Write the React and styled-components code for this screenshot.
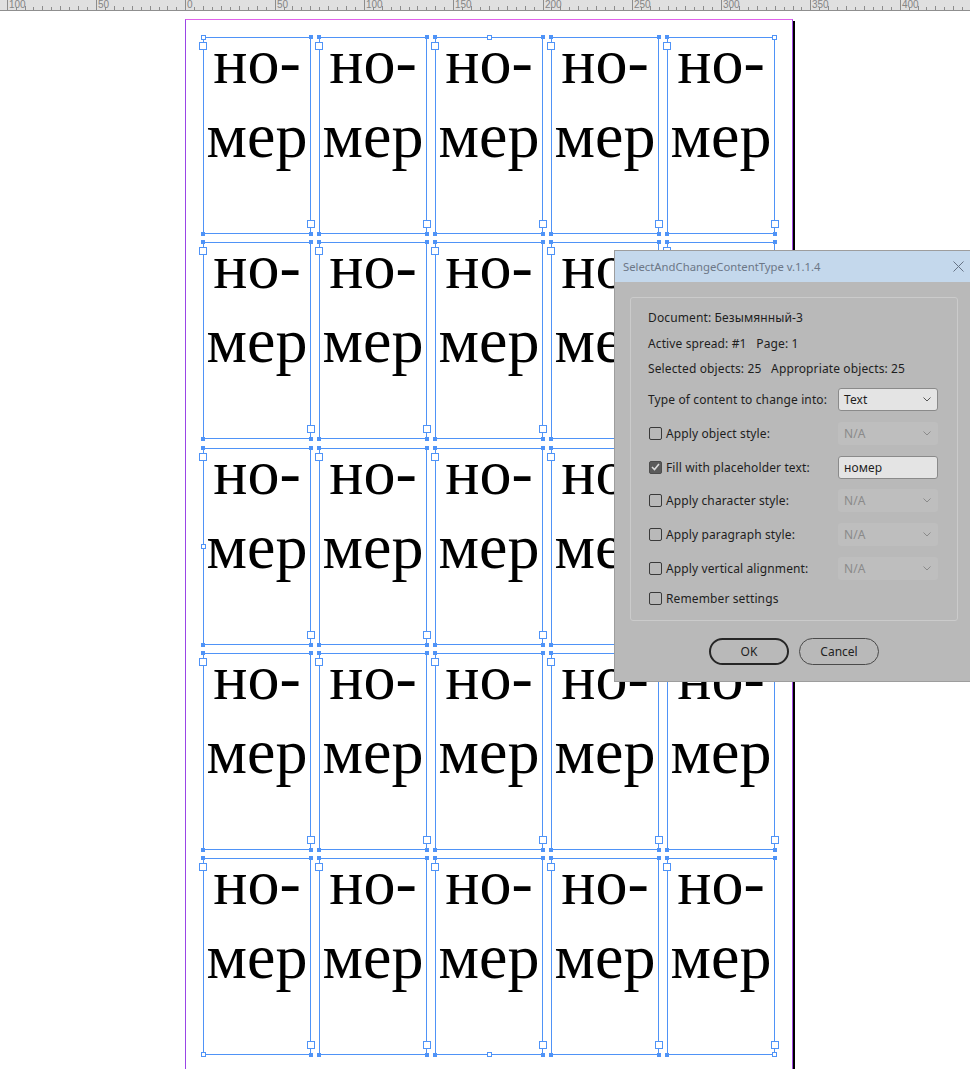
import React from "react";
import styled, { createGlobalStyle } from "styled-components";

const BLUE = "#4f93f7";

const GlobalStyle = createGlobalStyle`
  html, body {
    margin: 0;
    padding: 0;
    background: #fff;
    overflow: hidden;
  }
`;

const Screen = styled.div`
  position: relative;
  width: 970px;
  height: 1069px;
  overflow: hidden;
  background: #fff;
`;

const RulerSvg = styled.svg`
  display: block;
  width: 970px;
  height: 11px;
  background: #e0e0e0;
`;

const Pasteboard = styled.div`
  padding: 8px 0 0 185px;
`;

const Page = styled.div`
  box-sizing: border-box;
  width: 608px;
  height: 1100px;
  padding: 17px;
  border-left: 1px solid #9a45e6;
  border-top: 1px solid #df62ea;
  border-right: 1px solid #a04ae2;
  box-shadow: 2px 2px 0 #000;
  background: #fff;
`;

const FrameGrid = styled.div`
  position: relative;
  display: grid;
  grid-template-columns: repeat(5, 108px);
  grid-auto-rows: 197px;
  column-gap: 8px;
  row-gap: 8.25px;
  width: 572px;
`;

const Frame = styled.div`
  position: relative;
  box-sizing: border-box;
  border: 1px solid ${BLUE};
  text-align: center;
`;

const FrameText = styled.div`
  margin-top: -13px;
  font-family: "Liberation Serif", "Times New Roman", serif;
  font-size: 64px;
  line-height: 74px;
  color: #000;
`;

const Port = styled.span`
  position: absolute;
  box-sizing: border-box;
  width: 8px;
  height: 8px;
  background: #fff;
  border: 1px solid ${BLUE};
  ${(p) =>
    p.$out
      ? "right: -5px; bottom: 5px;"
      : "left: -5px; top: 4px;"}
`;

const Corner = styled.span`
  position: absolute;
  width: 4px;
  height: 4px;
  background: ${BLUE};
  ${(p) => (p.$bottom ? "bottom: -3px;" : "top: -3px;")}
  ${(p) => (p.$right ? "right: -3px;" : "left: -3px;")}
`;

const GroupHandle = styled.span`
  position: absolute;
  box-sizing: border-box;
  width: 5px;
  height: 5px;
  background: #fff;
  border: 1px solid ${BLUE};
  z-index: 2;
`;

const Dialog = styled.div`
  position: absolute;
  left: 614px;
  top: 250px;
  width: 358px;
  background: #b9b9b9;
  border: 1px solid #9d9d9d;
  font-family: "Noto Sans", "Open Sans", sans-serif;
  font-size: 12px;
  letter-spacing: 0.12px;
  color: #1e1e1e;
  z-index: 5;
`;

const TitleBar = styled.div`
  display: flex;
  align-items: center;
  justify-content: space-between;
  height: 31px;
  padding: 0 9px 0 8px;
  background: #c4d8ec;
  color: #6c7787;
  font-size: 11.3px;
  letter-spacing: 0;
`;

const Panel = styled.div`
  margin: 15px 15px 0;
  padding: 7px 19px 13px 17px;
  border: 1px solid #cbcbcb;
  border-radius: 3px;
`;

const InfoRow = styled.div`
  height: 25.5px;
  line-height: 25.5px;
  white-space: pre;
`;

const ControlList = styled.div`
  display: flex;
  flex-direction: column;
  gap: 10.8px;
  margin-top: 6.5px;
`;

const ControlRow = styled.div`
  display: flex;
  align-items: center;
  justify-content: space-between;
  height: 23px;
`;

const CheckLabel = styled.label`
  display: flex;
  align-items: center;
  gap: 4px;
  padding-left: 1px;
  height: ${(p) => (p.$tall ? "18px" : "auto")};
  margin-top: ${(p) => (p.$tall ? "9.5px" : "0")};
`;

const Box = styled.span`
  display: flex;
  align-items: center;
  justify-content: center;
  box-sizing: border-box;
  width: 13px;
  height: 13px;
  border: 1px solid ${(p) => (p.$checked ? "#4c4c4c" : "#3a3a3a")};
  border-radius: 2px;
  background: ${(p) => (p.$checked ? "#5b5b5b" : "transparent")};
`;

const Field = styled.div`
  display: flex;
  align-items: center;
  justify-content: space-between;
  box-sizing: border-box;
  width: 100px;
  height: 23px;
  padding: 0 6px 0 5px;
  border-radius: 3px;
  border: 1px solid ${(p) => (p.$disabled ? "transparent" : "#8a8a8a")};
  background: ${(p) => (p.$disabled ? "#bebebe" : "#e4e4e4")};
  color: ${(p) => (p.$disabled ? "#8a8a8a" : "#1e1e1e")};
`;

const Buttons = styled.div`
  display: flex;
  justify-content: center;
  gap: 10px;
  padding: 17px 0 16px;
`;

const Button = styled.button`
  box-sizing: border-box;
  width: 80px;
  height: 27px;
  border-radius: 14px;
  border: ${(p) => (p.$primary ? "2px solid #262626" : "1px solid #4a4a4a")};
  background: transparent;
  font: inherit;
  color: #222;
  padding: 0;
`;

function Ruler() {
  const zero = 185.3;
  const unit = 89.3 / 50;
  const ticks = [];
  const labels = [];
  for (let u = -105; u <= 440; u += 5) {
    const x = Math.round(zero + u * unit) + 0.5;
    const major = u % 50 === 0;
    const h = major ? 11 : u % 10 === 0 ? 4 : 3;
    ticks.push(<line key={u} x1={x} x2={x} y1={10} y2={10 - h} />);
    if (major) {
      labels.push(
        <text key={"l" + u} x={x + 1.5} y={7.5}>
          {Math.abs(u)}
        </text>
      );
    }
  }
  return (
    <RulerSvg viewBox="0 0 970 11">
      <g stroke="#8c8c8c" strokeWidth="1">{ticks}</g>
      <line x1="0" x2="970" y1="10.5" y2="10.5" stroke="#8f8f8f" />
      <g fill="#858585" fontSize="10" fontFamily="Liberation Sans, sans-serif">
        {labels}
      </g>
    </RulerSvg>
  );
}

const Chevron = ({ color }) => (
  <svg width="8" height="5" viewBox="0 0 8 5">
    <polyline points="0.5,0.5 4,4 7.5,0.5" fill="none" stroke={color} strokeWidth="1" />
  </svg>
);

const Check = () => (
  <svg width="9" height="8" viewBox="0 0 9 8">
    <polyline points="1,4 3.5,6.5 8,1" fill="none" stroke="#dcdcdc" strokeWidth="1.6" />
  </svg>
);

const groupHandles = [
  ["-2px", "-2px"],
  ["calc(50% - 2.5px)", "-2px"],
  ["calc(100% - 3px)", "-2px"],
  ["-2px", "calc(50% - 2.5px)"],
  ["calc(100% - 3px)", "calc(50% - 2.5px)"],
  ["-2px", "calc(100% - 3px)"],
  ["calc(50% - 2.5px)", "calc(100% - 3px)"],
  ["calc(100% - 3px)", "calc(100% - 3px)"],
];

const rows = [
  { label: "Apply object style:", field: "N/A", disabled: true },
  { label: "Fill with placeholder text:", field: "номер", checked: true, input: true },
  { label: "Apply character style:", field: "N/A", disabled: true },
  { label: "Apply paragraph style:", field: "N/A", disabled: true },
  { label: "Apply vertical alignment:", field: "N/A", disabled: true },
];

export default function App() {
  return (
    <Screen>
      <GlobalStyle />
      <Ruler />
      <Pasteboard>
        <Page>
          <FrameGrid>
            {Array.from({ length: 25 }, (_, i) => (
              <Frame key={i}>
                <FrameText>
                  но-
                  <br />
                  мер
                </FrameText>
                <Corner />
                <Corner $right />
                <Corner $bottom />
                <Corner $bottom $right />
                <Port />
                <Port $out />
              </Frame>
            ))}
            {groupHandles.map(([l, t], i) => (
              <GroupHandle key={i} style={{ left: l, top: t }} />
            ))}
          </FrameGrid>
        </Page>
      </Pasteboard>

      <Dialog>
        <TitleBar>
          <span>SelectAndChangeContentType v.1.1.4</span>
          <svg width="11" height="11" viewBox="0 0 11 11">
            <path d="M0.5 0.5 L10.5 10.5 M10.5 0.5 L0.5 10.5" stroke="#667385" strokeWidth="1" />
          </svg>
        </TitleBar>
        <Panel>
          <InfoRow>Document: Безымянный-3</InfoRow>
          <InfoRow>Active spread: #1   Page: 1</InfoRow>
          <InfoRow>Selected objects: 25   Appropriate objects: 25</InfoRow>
          <ControlList>
            <ControlRow>
              <span>Type of content to change into:</span>
              <Field>
                <span>Text</span>
                <Chevron color="#555" />
              </Field>
            </ControlRow>
            {rows.map((r) => (
              <ControlRow key={r.label}>
                <CheckLabel>
                  <Box $checked={r.checked}>{r.checked && <Check />}</Box>
                  <span>{r.label}</span>
                </CheckLabel>
                <Field $disabled={r.disabled}>
                  <span>{r.field}</span>
                  {!r.input && <Chevron color="#8a8a8a" />}
                </Field>
              </ControlRow>
            ))}
          </ControlList>
          <CheckLabel $tall>
            <Box />
            <span>Remember settings</span>
          </CheckLabel>
        </Panel>
        <Buttons>
          <Button $primary>OK</Button>
          <Button>Cancel</Button>
        </Buttons>
      </Dialog>
    </Screen>
  );
}
